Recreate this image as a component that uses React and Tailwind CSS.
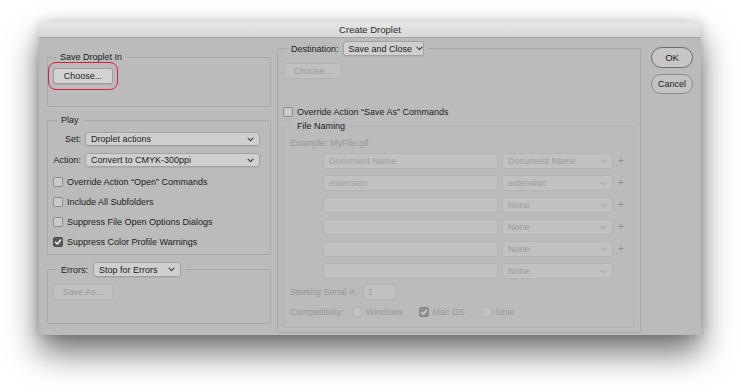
import React from "react";
import clsx from "clsx";

function Chevron({ className }) {
  return (
    <svg width="7" height="5" viewBox="0 0 7 5" className={className} fill="none">
      <path d="M1 1.2l2.5 2.4L6 1.2" stroke="currentColor" strokeWidth="1.1" strokeLinecap="round" strokeLinejoin="round" />
    </svg>
  );
}

function Select({ value, disabled, className }) {
  return (
    <div
      className={clsx(
        "flex items-center justify-between whitespace-nowrap rounded-[3px] border pl-[5px] pr-[5px]",
        disabled
          ? "border-[#b4b4b4] bg-[#c1c1c1] text-[#9c9c9c]"
          : "border-[#a2a2a2] bg-[#cfcfcf] text-[#1c1c1c] shadow-[0_1px_0_rgba(0,0,0,0.06)]",
        className
      )}
    >
      <span>{value}</span>
      <Chevron className={clsx("ml-[4px] shrink-0", disabled ? "text-[#a5a5a5]" : "text-[#3a3a3a]")} />
    </div>
  );
}

function Checkbox({ checked, disabled, label }) {
  return (
    <div className="flex h-[12px] items-center">
      <div
        className={clsx(
          "flex h-[10px] w-[10px] items-center justify-center rounded-[2px] border",
          checked
            ? disabled
              ? "border-[#8a8a8a] bg-[#8c8c8c]"
              : "border-[#4e4e4e] bg-[#5a5a5a]"
            : disabled
            ? "border-[#b0b0b0] bg-[#c2c2c2]"
            : "border-[#8e8e8e] bg-[#cbcbcb]"
        )}
      >
        {checked && (
          <svg width="8" height="8" viewBox="0 0 8 8" fill="none">
            <path d="M1.5 4.2l1.8 1.8L6.6 2" stroke={disabled ? "#d6d6d6" : "#ffffff"} strokeWidth="1.3" strokeLinecap="round" strokeLinejoin="round" />
          </svg>
        )}
      </div>
      {label && (
        <span className={clsx("ml-[4px] whitespace-nowrap", disabled ? "text-[#979797]" : "text-[#1c1c1c]")}>{label}</span>
      )}
    </div>
  );
}

function Button({ children, disabled, className }) {
  return (
    <div
      className={clsx(
        "flex h-[16px] items-center justify-center rounded-[3px] border",
        disabled
          ? "border-[#b2b2b2] bg-[#c0c0c0] text-[#9a9a9a]"
          : "border-[#9c9c9c] bg-[#d2d2d2] text-[#1c1c1c] shadow-[0_1px_0_rgba(0,0,0,0.07)]",
        className
      )}
    >
      {children}
    </div>
  );
}

function NamingRow({ text, option, plus = true }) {
  return (
    <div className="flex h-[16px] items-center">
      <div className="flex h-[16px] w-[175px] items-center rounded-[2px] border border-[#b4b4b4] bg-[#c1c1c1] pl-[5px] text-[#a0a0a0]">
        {text}
      </div>
      <Select value={option} disabled className="ml-[4px] h-[16px] w-[111px]" />
      {plus && <span className="ml-[5px] text-[10px] text-[#8c8c8c]">+</span>}
    </div>
  );
}

export default function App() {
  return (
    <div className="h-[391px] w-[740px] overflow-hidden bg-white pl-[39px] pt-[22px] font-['Liberation_Sans',Arial,sans-serif] text-[9px] leading-[12px] text-[#1c1c1c]">
      <div className="flex h-[313px] w-[662px] flex-col overflow-hidden rounded-t-[4px] rounded-b-[2px] bg-[#bbbbbb] shadow-[0_18px_32px_rgba(0,0,0,0.55),0_0_12px_rgba(0,0,0,0.18)]">
        {/* title bar */}
        <div className="flex h-[16px] shrink-0 items-center justify-center border-b border-[#a6a6a6] bg-gradient-to-b from-[#e7e7e7] to-[#d6d6d6] pt-[1px] text-[9.5px] text-[#2a2a2a]">
          Create Droplet
        </div>

        <div className="flex flex-1 pl-[8px] pr-[8px] pt-[3px]">
          {/* left column */}
          <div className="mt-[10px] flex w-[224px] flex-col">
            <fieldset className="rounded-[2px] border border-[#a8a8a8] pb-[22px] pl-[5px]">
              <legend className="ml-[3px] px-[4px]">Save Droplet In</legend>
              <div className="relative mt-[5px] w-[60px]">
                <Button className="w-[60px]">Choose...</Button>
                <div className="absolute left-[-5px] top-[-6px] h-[28px] w-[70px] rounded-[8px] border-[1.6px] border-[#d8203c]" />
              </div>
            </fieldset>

            <fieldset className="mt-[7px] rounded-[2px] border border-[#a8a8a8] pb-[6px] pl-[5px] pr-[10px]">
              <legend className="ml-[4px] px-[4px]">Play</legend>
              <div className="mt-[6px] flex items-center">
                <span className="w-[28px] text-right">Set:</span>
                <Select value="Droplet actions" className="ml-[4px] h-[14px] flex-1" />
              </div>
              <div className="mt-[7px] flex items-center">
                <span className="w-[28px] text-right">Action:</span>
                <Select value="Convert to CMYK-300ppi" className="ml-[4px] h-[14px] flex-1" />
              </div>
              <div className="mt-[9px] flex flex-col gap-[8px]">
                <Checkbox label={"Override Action \u201cOpen\u201d Commands"} />
                <Checkbox label="Include All Subfolders" />
                <Checkbox label="Suppress File Open Options Dialogs" />
                <Checkbox checked label="Suppress Color Profile Warnings" />
              </div>
            </fieldset>

            <fieldset className="mt-[7px] rounded-[2px] border border-[#a8a8a8] pb-[23px] pl-[5px]">
              <legend className="ml-[4px] flex items-center gap-[5px] px-[4px]">
                <span>Errors:</span>
                <Select value="Stop for Errors" className="h-[15px] w-[88px]" />
              </legend>
              <Button disabled className="mt-[7px] w-[60px]">Save As...</Button>
            </fieldset>
          </div>

          {/* right pane */}
          <fieldset className="ml-[6px] h-[292px] w-[364px] rounded-[2px] border border-[#a8a8a8] pl-[5px] pr-[6px]">
            <legend className="ml-[4px] flex items-center gap-[4px] px-[4px]">
              <span>Destination:</span>
              <Select value="Save and Close" className="h-[15px] w-[81px]" />
            </legend>
            <Button disabled className="mt-[7px] w-[59px]">Choose...</Button>
            <div className="mt-[27px]">
              <Checkbox label={"Override Action \u201cSave As\u201d Commands"} />
            </div>

            <fieldset className="mt-[2px] h-[208px] rounded-[2px] border border-[#b0b0b0] pl-[6px]">
              <legend className="ml-[3px] px-[4px]">File Naming</legend>
              <div className="mt-[5px] text-[#979797]">Example: MyFile.gif</div>
              <div className="ml-[33px] mt-[4px] flex flex-col gap-[6px]">
                <NamingRow text="Document Name" option="Document Name" />
                <NamingRow text="extension" option="extension" />
                <NamingRow text="" option="None" />
                <NamingRow text="" option="None" />
                <NamingRow text="" option="None" />
                <NamingRow text="" option="None" plus={false} />
              </div>
              <div className="mt-[5px] flex h-[16px] items-center text-[#979797]">
                <span className="w-[73px]">Starting Serial #:</span>
                <div className="flex h-[16px] w-[33px] items-center rounded-[2px] border border-[#b4b4b4] bg-[#c1c1c1] pl-[4px] text-[#a0a0a0]">
                  1
                </div>
              </div>
              <div className="mt-[6px] flex items-center text-[#979797]">
                <span className="w-[62px]">Compatibility:</span>
                <Checkbox disabled label="Windows" />
                <div className="ml-[16px]">
                  <Checkbox disabled checked label="Mac OS" />
                </div>
                <div className="ml-[17px]">
                  <Checkbox disabled label="Unix" />
                </div>
              </div>
            </fieldset>
          </fieldset>

          {/* buttons */}
          <div className="ml-[10px] mt-[6px] flex w-[42px] flex-col gap-[6px]">
            <div className="flex h-[21px] items-center justify-center rounded-full border border-[#6a6a6a] bg-[#c6c6c6] text-[9.5px]">
              OK
            </div>
            <div className="flex h-[20px] items-center justify-center rounded-full border border-[#8a8a8a] bg-[#c3c3c3]">
              Cancel
            </div>
          </div>
        </div>
      </div>
    </div>
  );
}
